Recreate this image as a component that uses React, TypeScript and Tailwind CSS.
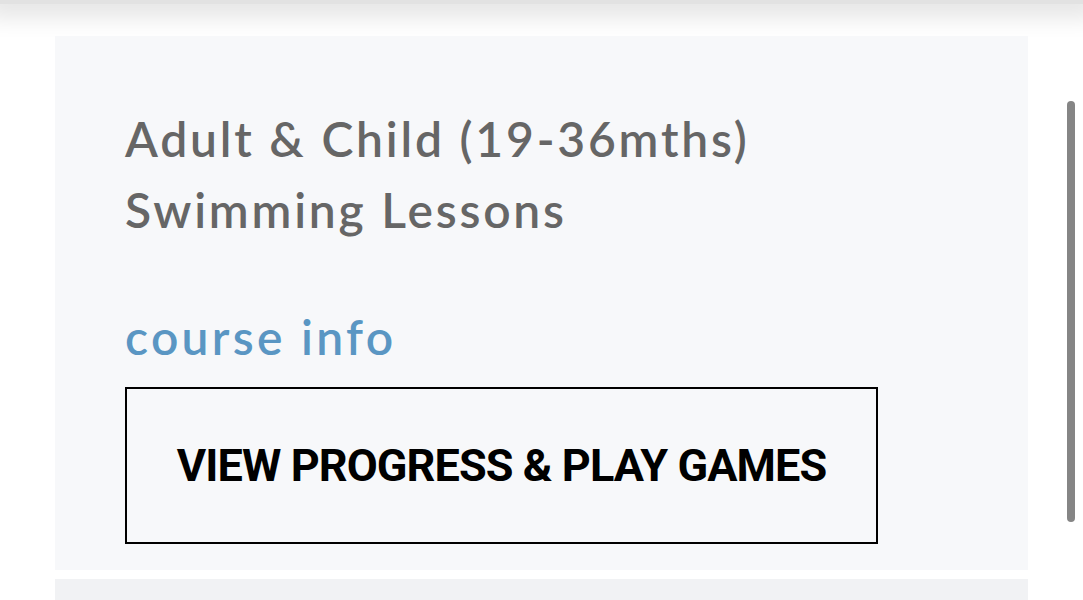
export default function App() {
  return (
    <div className="relative h-[600px] overflow-hidden bg-white">
      {/* sticky header edge, only its shadow shows */}
      <div className="h-[4px] bg-[#e2e2e2] shadow-[0_0_22px_14px_rgba(0,0,0,0.10)]" />

      <div className="mx-[55px] mt-[32px] flex flex-col gap-[9px]">
        <section className="bg-[#f7f8fa] px-[70px] pt-[67px] pb-[26px]">
          <h2
            className="text-[48px] font-semibold leading-[71px] tracking-[2.8px] text-[#666666]"
            style={{ fontFamily: 'Lato, "Noto Sans", sans-serif' }}
          >
            Adult &amp; Child (19-36mths)
            <br />
            Swimming Lessons
          </h2>
          <a
            href="#"
            className="mt-[56px] block text-[48px] font-semibold leading-[71px] tracking-[3.3px] text-[#5a96c3]"
            style={{ fontFamily: 'Lato, "Noto Sans", sans-serif' }}
          >
            course info
          </a>
          <button
            className="mt-[15px] flex h-[157px] w-[753px] items-center justify-center border-2 border-black text-[45px] font-bold uppercase tracking-[-0.9px] text-black"
            style={{ fontFamily: 'Roboto, "Liberation Sans", sans-serif' }}
          >
            View Progress &amp; Play Games
          </button>
        </section>
        <section className="h-[30px] bg-[#f1f2f4]" />
      </div>

      {/* scroll thumb */}
      <div className="absolute right-[8px] top-[101px] h-[421px] w-[8px] rounded-full bg-[#858585]" />
    </div>
  )
}
